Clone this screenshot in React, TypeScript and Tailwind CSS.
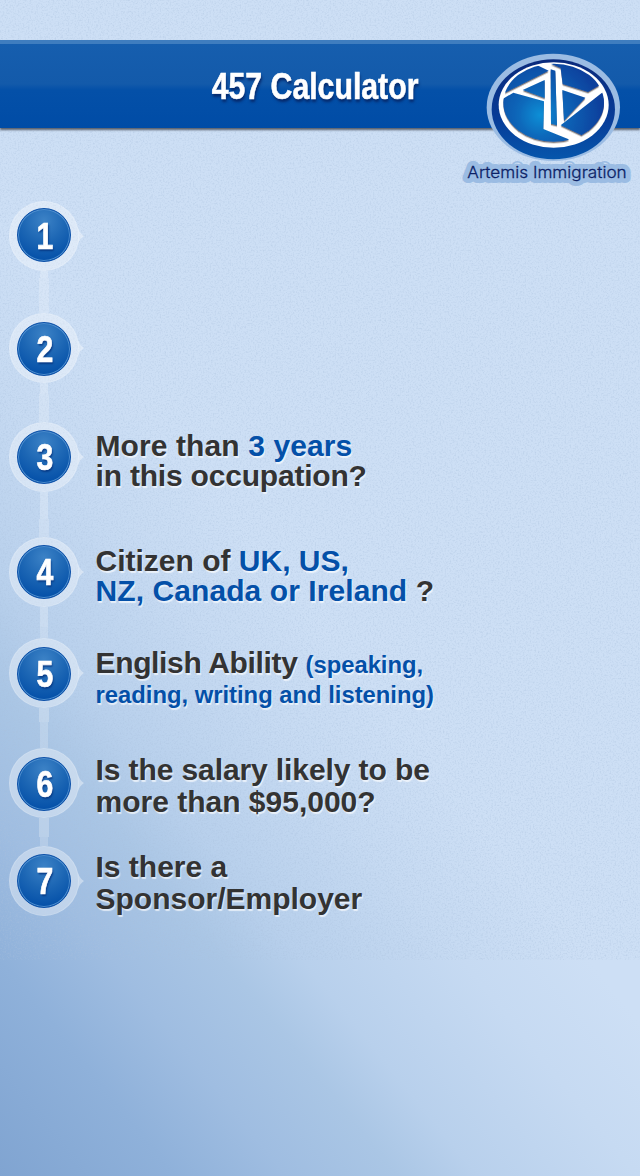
import React from "react";

type Step = {
  id: number;
  row: string;
  disc: string;
  digit: string;
  link?: [string, string];
  copy?: string;
  text?: React.ReactNode;
};

const Blue = ({ children }: { children: React.ReactNode }) => (
  <span className="text-[#0450a8]">{children}</span>
);

const steps: Step[] = [
  { id: 1, row: "h-[112px]", disc: "mt-[7px]", digit: "mt-[3px]", link: ["h-[7px] w-[8px]", "w-[10px]"] },
  { id: 2, row: "h-[109px]", disc: "mt-[9px]", digit: "mt-px", link: ["h-[11px] w-[8px]", "w-[10px]"] },
  {
    id: 3, row: "h-[115px]", disc: "mt-[8px]", digit: "mt-px", link: ["h-[27px] w-[8px]", "w-[10px]"],
    copy: "pt-[9px] leading-[30px]",
    text: <><span className="tracking-[0.1px]">More than <Blue>3 years</Blue></span><br /><span className="tracking-[-0.2px]">in this occupation?</span></>,
  },
  {
    id: 4, row: "h-[101px]", disc: "mt-[8px]", digit: "mt-px", link: ["h-[20px] w-[8px]", "w-[8px]"],
    copy: "pt-[9px] leading-[30px]",
    text: <>Citizen of <Blue>UK, US,</Blue><br /><span className="tracking-[0.08px]"><Blue>NZ, Canada or Ireland</Blue> ?</span></>,
  },
  {
    id: 5, row: "h-[110px]", disc: "mt-[9px]", digit: "mt-px", link: ["h-[14px] w-[10px]", "w-[8px]"],
    copy: "pt-[11px] leading-[28px]",
    text: <><span className="tracking-[-0.35px]">English Ability </span><span className="text-[23.8px] text-[#0450a8]">(speaking,<br />reading, writing and listening)</span></>,
  },
  {
    id: 6, row: "h-[98px]", disc: "mt-[9px]", digit: "mt-px", link: ["h-[19px] w-[10px]", "w-[8px]"],
    copy: "pt-[6px] leading-[32px]",
    text: <><span className="tracking-[-0.1px]">Is the salary likely to be</span><br />more than $95,000?</>,
  },
  {
    id: 7, row: "h-[70px]", disc: "mt-[8px]", digit: "mt-px",
    copy: "pt-[5px] leading-[32px]",
    text: <>Is there a<br />Sponsor/Employer</>,
  },
];

function Grain() {
  return (
    <svg className="pointer-events-none absolute left-0 top-0 h-[960px] w-full" aria-hidden="true">
      <filter id="grain" x="0" y="0" width="100%" height="100%">
        <feTurbulence type="fractalNoise" baseFrequency="0.6" numOctaves="2" seed="4" />
        <feColorMatrix values="0 0 0 0 0.4  0 0 0 0 0.53  0 0 0 0 0.72  2 0 0 0 -0.9" />
      </filter>
      <rect width="100%" height="100%" filter="url(#grain)" opacity="0.5" />
    </svg>
  );
}

function Logo() {
  return (
    <svg className="absolute left-[450px] top-[-14px] h-[170px] w-[190px]" viewBox="0 0 570 510">
      <defs>
        <radialGradient id="orb" gradientUnits="userSpaceOnUse" cx="270" cy="255" r="185">
          <stop offset="0" stopColor="#0f8fd6" />
          <stop offset="0.35" stopColor="#0a68ba" />
          <stop offset="0.75" stopColor="#0a50a8" />
          <stop offset="1" stopColor="#0c3f9c" />
        </radialGradient>
        <linearGradient id="rim" x1="0" y1="0" x2="0" y2="1">
          <stop offset="0" stopColor="#0a2a7c" />
          <stop offset="0.6" stopColor="#073c98" />
          <stop offset="1" stopColor="#0656ac" />
        </linearGradient>
        <clipPath id="disc">
          <ellipse cx="311" cy="218" rx="151" ry="117" />
        </clipPath>
        <filter id="edge" x="-10%" y="-10%" width="120%" height="120%">
          <feDropShadow dx="0" dy="4" stdDeviation="2" floodColor="#2a2522" floodOpacity="0.65" />
        </filter>
      </defs>
      <ellipse cx="310" cy="232" rx="200" ry="161" fill="#9bbce3" />
      <text x="52" y="445" fontFamily="Inter, 'Liberation Sans', sans-serif" fontWeight="300" fontSize="48" textLength="478" lengthAdjust="spacingAndGlyphs" fill="none" stroke="#9bbce3" strokeWidth="30" strokeLinejoin="round">Artemis Immigration</text>
      <ellipse cx="310" cy="238" rx="185" ry="150" fill="url(#rim)" />
      <ellipse cx="311" cy="225" rx="165" ry="128" fill="#fff" />
      <g filter="url(#edge)">
        <g clipPath="url(#disc)" fill="url(#orb)">
          <path d="M150 196L296 122L262 106V80H140Z" />
          <path d="M150 212L190 188L282 214L280 297L356 328V360H140Z" />
          <path d="M218 180L284 150V204Z" />
          <path d="M302 118L316 122L321 286L303 281Z" />
          <path d="M280 92L332 114L338 162L414 186L470 154V80H280Z" />
          <path d="M337 180L406 203L342 272Z" />
          <path d="M480 172L454 190L332 286L392 314L420 340L480 300Z" />
        </g>
      </g>
      <text x="52" y="445" fontFamily="Inter, 'Liberation Sans', sans-serif" fontWeight="300" fontSize="48" textLength="478" lengthAdjust="spacingAndGlyphs" fill="#0b1f66" stroke="#0b1f66" strokeWidth="0.8">Artemis Immigration</text>
    </svg>
  );
}

function Marker({ disc, digit, id }: { disc: string; digit: string; id: number }) {
  return (
    <div className="relative flex h-[70px] w-[70px] shrink-0 justify-center rounded-full border border-white/15 bg-white/35">
      <svg className="absolute left-[68px] top-[26px] h-[16px] w-[6px]" viewBox="0 0 6 16">
        <path d="M0 0Q1.500 5 6 8Q1.500 11 0 16Q1.200 8 0 0Z" fill="#fff" fillOpacity="0.4" />
      </svg>
      <div className={`${disc} flex h-[54px] w-[54px] -translate-y-px items-center justify-center rounded-full border border-[#0a4fa8] bg-[radial-gradient(circle_at_50%_22%,#3c82c6_0%,#1c66b4_45%,#034fa8_85%)] shadow-[inset_0_0_0_1px_#4f8fce]`}>
        <span className={`${digit} ml-[2px] scale-x-[0.84] text-[36px] font-bold leading-[36px] text-white [-webkit-text-stroke:0.7px_white] [text-shadow:1px_2px_2px_#073a86]`}>{id}</span>
      </div>
    </div>
  );
}

export default function App() {
  return (
    <main className="relative flex h-[1176px] w-[640px] flex-col overflow-hidden bg-[linear-gradient(51deg,#80a4d1_0%,#8fb1da_11%,#9fbde1_18%,#aac6e5_25%,#b8d0ec_30%,#c6daf2_40%,#cddff5_48%)] font-['Liberation_Sans',Arial,sans-serif]">
      <Grain />
      <header className="relative mt-[40px] flex h-[88px] items-center justify-center border-t-4 border-[#3f7dbf] bg-[linear-gradient(#165eae_0px,#135aaa_40px,#0450a8_46px,#004ca6_84px)] shadow-[0_2px_2px_0px_#5a616d]">
        <h1 className="-ml-[10px] mt-px scale-x-[0.84] text-[36px] font-bold leading-[36px] text-white [-webkit-text-stroke:0.6px_white] [text-shadow:1px_3px_3px_#06286a]">457 Calculator</h1>
        <Logo />
      </header>
      <ol className="relative mt-[73px] flex flex-col pl-[9px]">
        {steps.map((s) => (
          <li key={s.id} className={`${s.row} flex`}>
            <div className="flex h-full w-[70px] flex-col items-center">
              <Marker id={s.id} disc={s.disc} digit={s.digit} />
              {s.link && (
                <>
                  <div className={`${s.link[0]} bg-white/25`} />
                  <div className={`${s.link[1]} flex-1 bg-white/20`} />
                </>
              )}
            </div>
            {s.text && (
              <p className={`${s.copy} ml-[16.5px] whitespace-nowrap text-[30px] font-bold text-[#333] [text-shadow:1px_2px_1px_rgba(255,255,255,0.65)]`}>
                {s.text}
              </p>
            )}
          </li>
        ))}
      </ol>
    </main>
  );
}
